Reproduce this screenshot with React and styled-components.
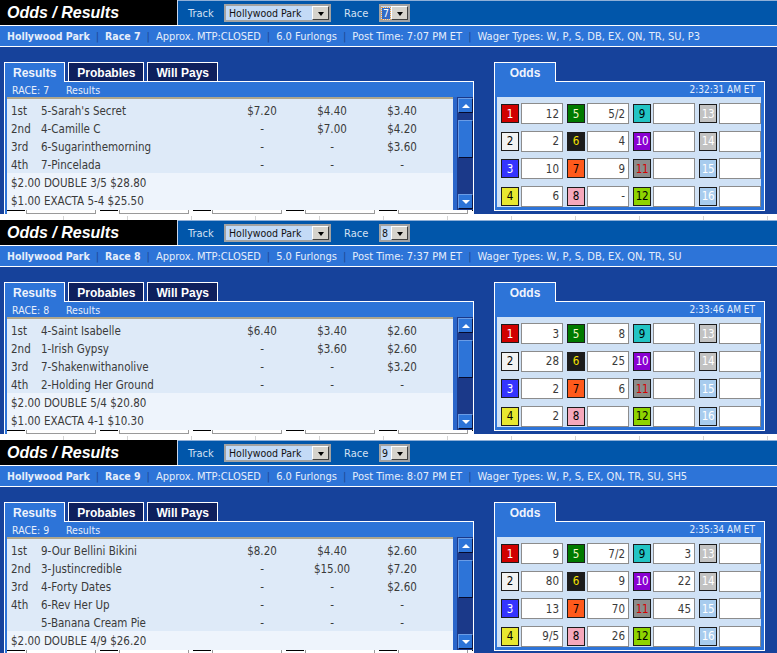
import React from "react";
import styled, { createGlobalStyle } from "styled-components";

const UI = `"DejaVu Sans Condensed", "DejaVu Sans", Verdana, sans-serif`;
const ARIAL = `"Liberation Sans", Arial, Helvetica, sans-serif`;

const C = {
  navy: "#16429b",
  bar: "#2d74d8",
  head: "#0156aa",
  tabDark: "#0e205d",
  rows: "#deeaf8",
  rowsLight: "#eef4fc",
  grid: "#cfe1f5",
  light: "#e6eefb",
};

const GlobalStyle = createGlobalStyle`
  html, body { margin: 0; padding: 0; background: #ffffff; overflow: hidden; }
  body { font-family: ${UI}; }
  #root { width: 777px; }
`;

const Panel = styled.section`
  height: 220px;
  display: flex;
  flex-direction: column;
  overflow: hidden;
  background: #fff;
`;

const HeaderRow = styled.div`
  display: flex;
  height: 25px;
  flex: none;
`;

const TitleBox = styled.div`
  width: 178px;
  flex: none;
  box-sizing: border-box;
  background: #000;
  color: #fff;
  font: italic bold 16px ${ARIAL};
  display: flex;
  align-items: center;
  padding: 1px 0 0 7px;
  border-right: 1px solid #c9d5ea;
`;

const Controls = styled.div`
  flex: 1;
  display: flex;
  align-items: center;
  box-sizing: border-box;
  background: ${C.head};
  border-top: 1px solid #8fb0d8;
  padding-left: 10px;
`;

const CtlLabel = styled.span`
  width: ${(p) => p.$w}px;
  flex: none;
  color: #d4e1f3;
  font-size: 11px;
`;

const SelectBox = styled.div`
  width: ${(p) => p.$w}px;
  height: 18px;
  flex: none;
  box-sizing: border-box;
  display: flex;
  align-items: stretch;
  border: 2px solid #a3a3a3;
  background: #c3daf6;
  margin-right: ${(p) => p.$mr || 0}px;
`;

const SelectValue = styled.span`
  flex: 1;
  display: flex;
  align-items: center;
  padding-left: ${(p) => (p.$tight ? 1 : 3)}px;
  font-size: 10.5px;
  color: #111;
  white-space: nowrap;
  overflow: hidden;
`;

const Focused = styled.span`
  background: #316ac5;
  color: #fff;
  outline: 1px dotted #f29a3a;
  line-height: 11px;
  padding: 0 1px;
`;

const DropBtn = styled.span`
  width: 17px;
  flex: none;
  box-sizing: border-box;
  background: #d6d3cc;
  border: 1px solid;
  border-color: #ffffff #404040 #404040 #ffffff;
  display: flex;
  align-items: flex-end;
  justify-content: center;
  padding-bottom: 3px;
`;

const DownTri = styled.span`
  width: 0;
  height: 0;
  border-left: 3.5px solid transparent;
  border-right: 3.5px solid transparent;
  border-top: 4px solid #000;
`;

const InfoBar = styled.div`
  flex: none;
  height: 20px;
  margin: 1px 0;
  background: ${C.bar};
  display: flex;
  align-items: center;
  padding-left: 7px;
  color: ${C.light};
  font-size: 11px;
  white-space: nowrap;
`;

const InfoStrong = styled.b`
  font-weight: bold;
  font-size: 10.5px;
`;

const Sep = styled.span`
  color: #1d4793;
  padding: 0 6px;
`;

const Body = styled.div`
  flex: none;
  height: 167px;
  box-sizing: border-box;
  background: ${C.navy};
  display: flex;
  align-items: flex-start;
  gap: 20px;
  padding: 15px 0 0 4px;
  overflow: hidden;
`;

const BottomStrip = styled.div`
  flex: 1;
  background: linear-gradient(#fff, #fff) top / 100% 2px no-repeat,
    repeating-linear-gradient(to right, #fff 0 63px, #d4d4d4 63px 64px);
`;

const Section = styled.div`
  width: ${(p) => p.$w}px;
  flex: none;
  display: flex;
  flex-direction: column;
`;

const TabRow = styled.div`
  display: flex;
  gap: 3px;
  height: 20px;
  background: linear-gradient(#fff, #fff) bottom / 100% 1px no-repeat;
`;

const Tab = styled.div`
  box-sizing: border-box;
  height: 20px;
  min-width: ${(p) => p.$min || 0}px;
  padding: 1px 8px 0;
  display: flex;
  align-items: center;
  justify-content: center;
  border: 1px solid #fff;
  border-bottom: ${(p) => (p.$active ? "none" : "1px solid #fff")};
  background: ${(p) => (p.$active ? C.bar : C.tabDark)};
  color: ${(p) => (p.$active ? "#eef3fc" : "#ffffff")};
  font: bold 12px ${ARIAL};
  white-space: nowrap;
`;

const Box = styled.div`
  border-left: 1px solid #fff;
  border-right: 1px solid #fff;
  border-bottom: ${(p) => (p.$closed ? "1px solid #fff" : "none")};
  background: ${C.bar};
  padding: ${(p) => (p.$closed ? "0 3px 3px 2px" : "0 0 0 2px")};
`;

const SubHeader = styled.div`
  height: 15px;
  display: flex;
  align-items: center;
  padding-left: 5px;
  color: ${C.light};
  font-size: 10.5px;
`;

const SubCell = styled.span`
  width: ${(p) => p.$w || "auto"};
`;

const ScrollArea = styled.div`
  height: 113px;
  display: flex;
`;

const Table = styled.div`
  flex: 1;
  display: flex;
  flex-direction: column;
  border-top: 2px solid #b0a78c;
  background: ${C.rowsLight};
  overflow: hidden;
`;

const Finish = styled.div`
  background: ${C.rows};
  padding-top: 2px;
`;

const Row = styled.div`
  display: grid;
  grid-template-columns: 30px 186px 70px 70px 70px;
  height: 18px;
  box-sizing: border-box;
  padding: 2px 0 0 4px;
  align-items: center;
  color: #3a3a3a;
  font-size: 11.5px;
  white-space: nowrap;
`;

const Wide = styled.span`
  grid-column: 1 / -1;
`;

const Money = styled.span`
  text-align: center;
`;

const Scrollbar = styled.div`
  width: 20px;
  flex: none;
  box-sizing: border-box;
  display: flex;
  flex-direction: column;
  border-left: 4px solid #2b66ca;
  background: #1b3989;
  padding: 1px 0 1px 1px;
`;

const ScrollBtn = styled.div`
  height: 15px;
  flex: none;
  box-sizing: border-box;
  background: ${C.bar};
  border: 1px solid;
  border-color: #6a9ce6 #0b1648 #050a2c #6a9ce6;
  display: flex;
  align-items: center;
  justify-content: center;
  margin-top: ${(p) => (p.$bottom ? "auto" : "0")};
`;

const Thumb = styled.div`
  height: 38px;
  margin-top: 7px;
  box-sizing: border-box;
  background: ${C.bar};
  border: 1px solid;
  border-color: #6a9ce6 #0b1648 #050a2c #6a9ce6;
`;

const Tri = styled.span`
  width: 0;
  height: 0;
  border-left: 4px solid transparent;
  border-right: 4px solid transparent;
  ${(p) => (p.$up ? "border-bottom: 4px solid #fff;" : "border-top: 4px solid #fff;")}
`;

const ClipStrip = styled.div`
  height: 4px;
  display: flex;
  gap: 4px;
  background: #fff;
  overflow: hidden;
`;

const StripCell = styled.div`
  width: 89px;
  flex: none;
  display: flex;
  gap: 1px;
`;

const StripDark = styled.span`
  width: 18px;
  border-top: 1px solid #000;
`;

const StripBox = styled.span`
  flex: 1;
  border: 1px solid #9a9a9a;
  border-top: none;
  height: 3px;
`;

const Clock = styled.div`
  height: 15px;
  display: flex;
  align-items: center;
  justify-content: flex-end;
  padding-right: 6px;
  color: ${C.light};
  font-size: 10px;
`;

const OddsGrid = styled.div`
  height: 110px;
  box-sizing: border-box;
  background: ${C.grid};
  display: grid;
  grid-template-columns: repeat(4, 62px);
  grid-template-rows: repeat(4, 21px);
  grid-auto-flow: column;
  column-gap: 4px;
  row-gap: 6.5px;
  padding: 6px 0 0 4px;
`;

const OddsCell = styled.div`
  display: flex;
  align-items: center;
  gap: 2px;
`;

const NumBox = styled.span`
  width: 18px;
  height: 19px;
  flex: none;
  box-sizing: border-box;
  border: 1px solid #1c1c1c;
  background: ${(p) => p.$bg};
  color: ${(p) => p.$fg};
  display: flex;
  align-items: center;
  justify-content: center;
  font-size: 11.5px;
  letter-spacing: -0.3px;
`;

const ValueBox = styled.span`
  width: 42px;
  height: 21px;
  flex: none;
  box-sizing: border-box;
  border: 1px solid #8c8c8c;
  background: #fff;
  display: flex;
  align-items: center;
  justify-content: flex-end;
  padding-right: 3px;
  color: #3a3a3a;
  font-size: 11.5px;
`;

const SADDLE = {
  1: ["#d00000", "#ffffff"],
  2: ["#f2f2f2", "#000000"],
  3: ["#3434ff", "#ffffff"],
  4: ["#e8e830", "#000000"],
  5: ["#007a00", "#f6f6c6"],
  6: ["#1c1c1c", "#f4e400"],
  7: ["#ff5a1c", "#000000"],
  8: ["#f6a8bc", "#000000"],
  9: ["#22c4c4", "#000000"],
  10: ["#8a00d2", "#ffffff"],
  11: ["#8c8c8c", "#d40000"],
  12: ["#8ed400", "#000000"],
  13: ["#c2c2c2", "#ffffff"],
  14: ["#c2c2c2", "#ffffff"],
  15: ["#a8ccee", "#ffffff"],
  16: ["#a8ccee", "#ffffff"],
};

const RACES = [
  {
    race: 7,
    focused: true,
    furlongs: "6.0 Furlongs",
    post: "7:07 PM ET",
    wagers: "W, P, S, DB, EX, QN, TR, SU, P3",
    finish: [
      ["1st", "5-Sarah's Secret", "$7.20", "$4.40", "$3.40"],
      ["2nd", "4-Camille C", "-", "$7.00", "$4.20"],
      ["3rd", "6-Sugarinthemorning", "-", "-", "$3.60"],
      ["4th", "7-Pincelada", "-", "-", "-"],
    ],
    exotics: ["$2.00 DOUBLE 3/5 $28.80", "$1.00 EXACTA 5-4 $25.50"],
    clock: "2:32:31 AM ET",
    odds: { 1: "12", 2: "2", 3: "10", 4: "6", 5: "5/2", 6: "4", 7: "9", 8: "-" },
  },
  {
    race: 8,
    furlongs: "5.0 Furlongs",
    post: "7:37 PM ET",
    wagers: "W, P, S, DB, EX, QN, TR, SU",
    finish: [
      ["1st", "4-Saint Isabelle", "$6.40", "$3.40", "$2.60"],
      ["2nd", "1-Irish Gypsy", "-", "$3.60", "$2.60"],
      ["3rd", "7-Shakenwithanolive", "-", "-", "$3.20"],
      ["4th", "2-Holding Her Ground", "-", "-", "-"],
    ],
    exotics: ["$2.00 DOUBLE 5/4 $20.80", "$1.00 EXACTA 4-1 $10.30"],
    clock: "2:33:46 AM ET",
    odds: { 1: "3", 2: "28", 3: "2", 4: "2", 5: "8", 6: "25", 7: "6" },
  },
  {
    race: 9,
    furlongs: "6.0 Furlongs",
    post: "8:07 PM ET",
    wagers: "W, P, S, EX, QN, TR, SU, SH5",
    finish: [
      ["1st", "9-Our Bellini Bikini", "$8.20", "$4.40", "$2.60"],
      ["2nd", "3-Justincredible", "-", "$15.00", "$7.20"],
      ["3rd", "4-Forty Dates", "-", "-", "$2.60"],
      ["4th", "6-Rev Her Up", "-", "-", "-"],
      ["", "5-Banana Cream Pie", "-", "-", "-"],
    ],
    exotics: ["$2.00 DOUBLE 4/9 $26.20"],
    clock: "2:35:34 AM ET",
    odds: { 1: "9", 2: "80", 3: "13", 4: "9/5", 5: "7/2", 6: "9", 7: "70", 8: "26", 9: "3", 10: "22", 11: "45" },
  },
];

function RacePanel({ r }) {
  const nums = Array.from({ length: 16 }, (_, i) => i + 1);
  return (
    <Panel>
      <HeaderRow>
        <TitleBox>Odds / Results</TitleBox>
        <Controls>
          <CtlLabel $w={36}>Track</CtlLabel>
          <SelectBox $w={107} $mr={13}>
            <SelectValue>Hollywood Park</SelectValue>
            <DropBtn>
              <DownTri />
            </DropBtn>
          </SelectBox>
          <CtlLabel $w={35}>Race</CtlLabel>
          <SelectBox $w={31}>
            <SelectValue $tight>
              {r.focused ? <Focused>{r.race}</Focused> : r.race}
            </SelectValue>
            <DropBtn>
              <DownTri />
            </DropBtn>
          </SelectBox>
        </Controls>
      </HeaderRow>
      <InfoBar>
        <InfoStrong>Hollywood Park</InfoStrong>
        <Sep>|</Sep>
        <InfoStrong>Race {r.race}</InfoStrong>
        <Sep>|</Sep>
        <span>Approx. MTP:CLOSED</span>
        <Sep>|</Sep>
        <span>{r.furlongs}</span>
        <Sep>|</Sep>
        <span>Post Time: {r.post}</span>
        <Sep>|</Sep>
        <span>Wager Types: {r.wagers}</span>
      </InfoBar>
      <Body>
        <Section $w={470}>
          <TabRow>
            <Tab $active>Results</Tab>
            <Tab>Probables</Tab>
            <Tab>Will Pays</Tab>
          </TabRow>
          <Box>
            <SubHeader>
              <SubCell $w="54px">RACE: {r.race}</SubCell>
              <SubCell>Results</SubCell>
            </SubHeader>
            <ScrollArea>
              <Table>
                <Finish>
                  {r.finish.map((f, i) => (
                    <Row key={i}>
                      <span>{f[0]}</span>
                      <span>{f[1]}</span>
                      <Money>{f[2]}</Money>
                      <Money>{f[3]}</Money>
                      <Money>{f[4]}</Money>
                    </Row>
                  ))}
                </Finish>
                {r.exotics.map((e, i) => (
                  <Row key={i}>
                    <Wide>{e}</Wide>
                  </Row>
                ))}
              </Table>
              <Scrollbar>
                <ScrollBtn>
                  <Tri $up />
                </ScrollBtn>
                <Thumb />
                <ScrollBtn $bottom>
                  <Tri />
                </ScrollBtn>
              </Scrollbar>
            </ScrollArea>
            <ClipStrip>
              {[0, 1, 2, 3, 4, 5].map((k) => (
                <StripCell key={k}>
                  <StripDark />
                  <StripBox />
                </StripCell>
              ))}
            </ClipStrip>
          </Box>
        </Section>
        <Section $w={271}>
          <TabRow>
            <Tab $active $min={62}>
              Odds
            </Tab>
          </TabRow>
          <Box $closed>
            <Clock>{r.clock}</Clock>
            <OddsGrid>
              {nums.map((n) => (
                <OddsCell key={n}>
                  <NumBox $bg={SADDLE[n][0]} $fg={SADDLE[n][1]}>
                    {n}
                  </NumBox>
                  <ValueBox>{r.odds[n] || ""}</ValueBox>
                </OddsCell>
              ))}
            </OddsGrid>
          </Box>
        </Section>
      </Body>
      <BottomStrip />
    </Panel>
  );
}

export default function App() {
  return (
    <>
      <GlobalStyle />
      {RACES.map((r) => (
        <RacePanel key={r.race} r={r} />
      ))}
    </>
  );
}
